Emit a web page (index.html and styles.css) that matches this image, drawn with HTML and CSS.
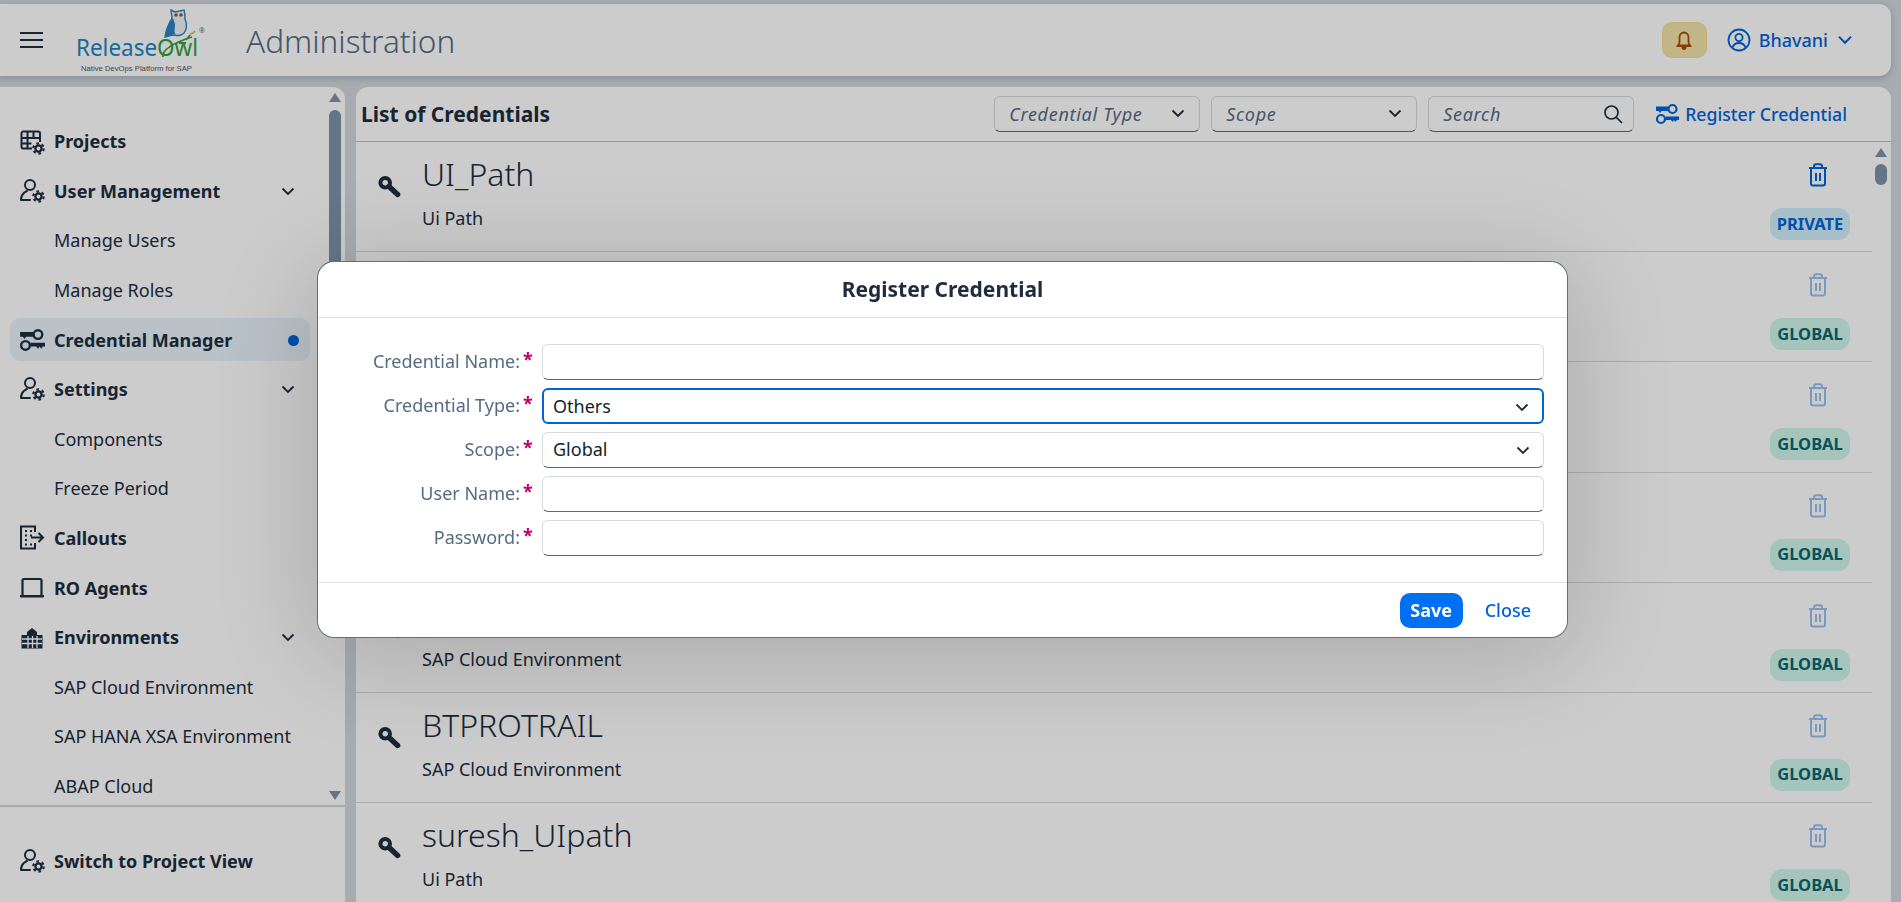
FILE: index.html
```html
<!DOCTYPE html>
<html lang="en">
<head>
    <meta charset="UTF-8">
    <meta name="viewport" content="width=device-width, initial-scale=1.0">
    <title>Administration</title>
    <link rel="stylesheet" href="styles.css">
</head>
<body>
    <svg class="defs" width="0" height="0">
        <symbol id="gear" viewBox="0 0 14 14">
            <circle cx="7" cy="7" r="3.300" fill="none" stroke="currentColor" stroke-width="2.400"/>
            <circle cx="7" cy="7" r="5.600" fill="none" stroke="currentColor" stroke-width="2.400" stroke-dasharray="2.800 3.060"/>
        </symbol>
        <symbol id="person-gear" viewBox="0 0 26 26">
            <circle cx="11" cy="7" r="5" fill="none" stroke="currentColor" stroke-width="2"/>
            <path d="M2 22h9M2 22c0-5 2.500-7.500 6-9" fill="none" stroke="currentColor" stroke-width="2" stroke-linecap="round"/>
            <use href="#gear" x="13" y="12" width="13" height="13"/>
        </symbol>
        <symbol id="key" viewBox="0 0 24 24">
            <circle cx="7.500" cy="7.500" r="5" fill="none" stroke="currentColor" stroke-width="4.200"/>
            <path d="M11.500 11.500L20.500 19.800" fill="none" stroke="currentColor" stroke-width="5.600" stroke-linecap="round"/>
        </symbol>
        <symbol id="trash" viewBox="0 0 22 24">
            <path d="M2 5h18M7 5V3.500C7 2 8 1.300 9 1.300h4c1 0 2 .7 2 2.200V5M4 5v15.500c0 1.200 .8 2 2 2h10c1.200 0 2-.8 2-2V5M9 10v8M13 10v8" fill="none" stroke="currentColor" stroke-width="2"/>
        </symbol>
        <symbol id="keys" viewBox="0 0 24 22">
            <circle cx="17.500" cy="6" r="4" fill="none" stroke="currentColor" stroke-width="2.200"/>
            <path d="M1 3.500h12.500v4.500H6.500L5 10 3.500 8H1z" fill="currentColor"/>
            <circle cx="6" cy="16" r="4" fill="none" stroke="currentColor" stroke-width="2.200"/>
            <path d="M10.500 13.500H24v3.500h-2l-1.500 2-1.500-2-1.500 2-1.500-2h-5.500z" fill="currentColor"/>
        </symbol>
        <symbol id="chevron" viewBox="0 0 14 9">
            <path d="M1.500 1.500L7 7l5.500-5.500" fill="none" stroke="currentColor" stroke-width="1.800"/>
        </symbol>
    </svg>

    <header class="topbar">
        <svg class="burger" viewBox="0 0 23 16"><path d="M0 1h23M0 8h23M0 15h23" stroke="currentColor" stroke-width="1.800"/></svg>
        <svg class="logo" viewBox="0 0 130 66">
            <path d="M95 3l4 2 5-1 4-1c1 3 1 6 1 9 2 5 2 10-1 14-3 3-6 3-9 2-4 0-7 1-10 2 1-8 4-14 7-19 0-3-1-5-1-8z" fill="#eef3f6" stroke="#2c82c4" stroke-width="1.400"/>
            <path d="M89 30c1-8 4-14 8-19l2 6c0 4-1 7 0 10-3 1-7 2-10 3z" fill="#2c82c4"/>
            <circle cx="100" cy="8" r="1.800" fill="#a0522d"/>
            <circle cx="105" cy="8" r="1.800" fill="#a0522d"/>
            <path d="M87 50c-1-7 10-14 29-20M103 36l7 0M110 33l4-5" fill="none" stroke="#3f9a3a" stroke-width="1.800"/>
            <path d="M114 27l3-1 2-2" fill="none" stroke="#c6c23a" stroke-width="1.500"/>
            <text class="logo-word" x="0" y="49" textLength="122" lengthAdjust="spacingAndGlyphs"><tspan fill="#1f84c4">Release</tspan><tspan fill="#35a044">Owl</tspan></text>
            <text class="logo-mark" x="123" y="26">®</text>
            <text class="logo-tag" x="5" y="63.500" textLength="111" lengthAdjust="spacingAndGlyphs">Native DevOps Platform for SAP</text>
        </svg>
        <h1 class="page-title">Administration</h1>
        <div class="topbar-right">
            <button class="bell">
                <svg viewBox="0 0 16 22" width="16" height="22"><path d="M2 16.500c1-1 1.500-2 1.500-4V8a4.500 4.500 0 0 1 9 0v4.500c0 2 .5 3 1.500 4zM1 17h14" fill="none" stroke="currentColor" stroke-width="1.800"/><path d="M5.500 18h5c0 2-1 3-2.500 3s-2.500-1-2.500-3z" fill="currentColor"/></svg>
            </button>
            <svg class="avatar" viewBox="0 0 24 24"><circle cx="12" cy="12" r="10.500" fill="none" stroke="currentColor" stroke-width="1.800"/><circle cx="12" cy="9.500" r="3.600" fill="none" stroke="currentColor" stroke-width="1.800"/><path d="M5.500 19.500c1-3 3.500-4.500 6.500-4.500s5.500 1.500 6.500 4.500" fill="none" stroke="currentColor" stroke-width="1.800"/></svg>
            <span class="user-name">Bhavani</span>
            <svg class="user-chevron"><use href="#chevron"/></svg>
        </div>
    </header>

    <div class="workspace">
        <nav class="sidebar">
            <div class="nav-scroll">
                <ul class="nav-list">
                    <li class="nav-item">
                        <svg class="nav-icon" viewBox="0 0 26 26"><path d="M4 2.500h15c1 0 2 1 2 2V13M2.500 4.500c0-1 1-2 1.500-2M2.500 4v13.500c0 1 .5 2 1.500 2h9M2.500 9h18M2.500 14.500h10M8.500 2.500v17M14.500 2.500V9" fill="none" stroke="currentColor" stroke-width="2"/><use href="#gear" x="13" y="13" width="13" height="13"/></svg>
                        Projects
                    </li>
                    <li class="nav-item">
                        <svg class="nav-icon"><use href="#person-gear"/></svg>
                        User Management
                        <svg class="nav-chevron"><use href="#chevron"/></svg>
                    </li>
                    <li class="nav-item nav-sub">Manage Users</li>
                    <li class="nav-item nav-sub">Manage Roles</li>
                    <li class="nav-item nav-active">
                        <svg class="nav-icon"><use href="#keys"/></svg>
                        Credential Manager
                        <span class="nav-dot"></span>
                    </li>
                    <li class="nav-item">
                        <svg class="nav-icon"><use href="#person-gear"/></svg>
                        Settings
                        <svg class="nav-chevron"><use href="#chevron"/></svg>
                    </li>
                    <li class="nav-item nav-sub">Components</li>
                    <li class="nav-item nav-sub">Freeze Period</li>
                    <li class="nav-item">
                        <svg class="nav-icon" viewBox="0 0 26 26"><path d="M16 7V1.500H2v22h14V18M6 6h2M11 6h2M6 10.500h2M11 10.500h2M6 15h2M11 15h0M6 19.500h2M11 19.500h2M12 12.500h12M19.500 8l4.500 4.500-4.500 4.500" fill="none" stroke="currentColor" stroke-width="2"/></svg>
                        Callouts
                    </li>
                    <li class="nav-item">
                        <svg class="nav-icon" viewBox="0 0 26 26"><path d="M3.500 20V5.500c0-1 .5-1.500 1.500-1.500h16c1 0 1.500 .5 1.500 1.500V20" fill="none" stroke="currentColor" stroke-width="2.200"/><path d="M1 20h24v1.500c0 .5-.5 1-1 1H2c-.5 0-1-.5-1-1z" fill="currentColor"/></svg>
                        RO Agents
                    </li>
                    <li class="nav-item">
                        <svg class="nav-icon" viewBox="0 0 26 26"><path d="M13 1v3l5 4v3h5.500v13.500h-21V11H8V8l5-4z" fill="currentColor"/><path d="M3 15h20M3 19.500h20M9 12v12M13.500 12v12M18 12v12" stroke="#fff" stroke-width="1.300"/></svg>
                        Environments
                        <svg class="nav-chevron"><use href="#chevron"/></svg>
                    </li>
                    <li class="nav-item nav-sub">SAP Cloud Environment</li>
                    <li class="nav-item nav-sub">SAP HANA XSA Environment</li>
                    <li class="nav-item nav-sub">ABAP Cloud</li>
                </ul>
                <div class="scrollbar scrollbar-nav">
                    <span class="arrow-up"></span>
                    <span class="thumb"></span>
                    <span class="arrow-down"></span>
                </div>
            </div>
            <div class="nav-footer">
                <div class="nav-item">
                    <svg class="nav-icon"><use href="#person-gear"/></svg>
                    Switch to Project View
                </div>
            </div>
        </nav>

        <main class="panel">
            <div class="panel-head">
                <h2 class="panel-title">List of Credentials</h2>
                <div class="filter">Credential Type<svg class="filter-chevron"><use href="#chevron"/></svg></div>
                <div class="filter">Scope<svg class="filter-chevron"><use href="#chevron"/></svg></div>
                <div class="filter">Search
                    <svg class="filter-search" viewBox="0 0 20 20"><circle cx="8.500" cy="8.500" r="6.500" fill="none" stroke="currentColor" stroke-width="1.700"/><path d="M13 13l6 6" stroke="currentColor" stroke-width="1.700"/></svg>
                </div>
                <a class="register-link"><svg class="register-icon"><use href="#keys"/></svg>Register Credential</a>
            </div>
            <div class="cred-list">
                <div class="cred-row">
                    <svg class="cred-key"><use href="#key"/></svg>
                    <div class="cred-text"><div class="cred-name">UI_Path</div><div class="cred-type">Ui Path</div></div>
                    <div class="cred-side"><svg class="cred-trash"><use href="#trash"/></svg><span class="badge badge-private">PRIVATE</span></div>
                </div>
                <div class="cred-row">
                    <svg class="cred-key"><use href="#key"/></svg>
                    <div class="cred-text"><div class="cred-name"></div><div class="cred-type"></div></div>
                    <div class="cred-side"><svg class="cred-trash is-off"><use href="#trash"/></svg><span class="badge">GLOBAL</span></div>
                </div>
                <div class="cred-row">
                    <svg class="cred-key"><use href="#key"/></svg>
                    <div class="cred-text"><div class="cred-name"></div><div class="cred-type"></div></div>
                    <div class="cred-side"><svg class="cred-trash is-off"><use href="#trash"/></svg><span class="badge">GLOBAL</span></div>
                </div>
                <div class="cred-row">
                    <svg class="cred-key"><use href="#key"/></svg>
                    <div class="cred-text"><div class="cred-name"></div><div class="cred-type"></div></div>
                    <div class="cred-side"><svg class="cred-trash is-off"><use href="#trash"/></svg><span class="badge">GLOBAL</span></div>
                </div>
                <div class="cred-row">
                    <svg class="cred-key"><use href="#key"/></svg>
                    <div class="cred-text"><div class="cred-name"></div><div class="cred-type">SAP Cloud Environment</div></div>
                    <div class="cred-side"><svg class="cred-trash is-off"><use href="#trash"/></svg><span class="badge">GLOBAL</span></div>
                </div>
                <div class="cred-row">
                    <svg class="cred-key"><use href="#key"/></svg>
                    <div class="cred-text"><div class="cred-name">BTPROTRAIL</div><div class="cred-type">SAP Cloud Environment</div></div>
                    <div class="cred-side"><svg class="cred-trash is-off"><use href="#trash"/></svg><span class="badge">GLOBAL</span></div>
                </div>
                <div class="cred-row">
                    <svg class="cred-key"><use href="#key"/></svg>
                    <div class="cred-text"><div class="cred-name">suresh_UIpath</div><div class="cred-type">Ui Path</div></div>
                    <div class="cred-side"><svg class="cred-trash is-off"><use href="#trash"/></svg><span class="badge">GLOBAL</span></div>
                </div>
                <div class="scrollbar scrollbar-list">
                    <span class="arrow-up"></span>
                    <span class="thumb"></span>
                </div>
            </div>
        </main>
    </div>

    <div class="scrim"></div>

    <section class="dialog">
        <div class="dialog-head">Register Credential</div>
        <form class="dialog-form">
            <label class="form-label">Credential Name:<span class="req">*</span></label>
            <input class="field" type="text">
            <label class="form-label">Credential Type:<span class="req">*</span></label>
            <div class="field field-focus">Others<svg class="field-chevron"><use href="#chevron"/></svg></div>
            <label class="form-label">Scope:<span class="req">*</span></label>
            <div class="field">Global<svg class="field-chevron"><use href="#chevron"/></svg></div>
            <label class="form-label">User Name:<span class="req">*</span></label>
            <input class="field" type="text">
            <label class="form-label">Password:<span class="req">*</span></label>
            <input class="field" type="password">
        </form>
        <div class="dialog-foot">
            <button class="btn-save">Save</button>
            <button class="btn-close">Close</button>
        </div>
    </section>
</body>
</html>
```

FILE: styles.css
```css
* {
    box-sizing: border-box;
}
html, body {
    height: 100%;
}
body {
    margin: 0;
    padding-top: 4px;
    overflow: hidden;
    display: flex;
    flex-direction: column;
    gap: 11px;
    background-color: #d2d7dc;
    color: #1d2d3e;
    font-family: "Noto Sans", Arial, sans-serif;
    font-size: 18px;
}
.defs {
    position: absolute;
}
h1, h2, ul {
    margin: 0;
    padding: 0;
}
li {
    list-style: none;
}

/* top bar */
.topbar {
    flex: 0 0 72px;
    margin-right: 10px;
    padding-left: 20px;
    display: flex;
    align-items: center;
    background-color: #fff;
    border-radius: 0 12px 12px 0;
    box-shadow: 0 2px 6px rgba(85, 107, 130, .35);
}
.burger {
    width: 23px;
    height: 16px;
    color: #1d2d3e;
}
.logo {
    width: 130px;
    height: 66px;
    margin-left: 33px;
}
.logo-word {
    font-size: 23px;
}
.logo-mark {
    font-size: 7px;
    fill: #666;
}
.logo-tag {
    font-family: "Liberation Sans", Arial, sans-serif;
    font-size: 7.5px;
    fill: #555;
}
.page-title {
    margin-left: 40px;
    font-size: 31.5px;
    font-weight: 300;
    color: #556b82;
}
.topbar-right {
    margin-left: auto;
    padding-right: 38px;
    display: flex;
    align-items: center;
    color: #0064d9;
}
.bell {
    width: 45px;
    height: 36px;
    padding: 0;
    margin-right: 20px;
    display: flex;
    align-items: center;
    justify-content: center;
    color: #aa4a00;
    background-color: #f3e3ab;
    border: 1px solid #f0dc90;
    border-radius: 10px;
}
.avatar {
    width: 24px;
    height: 24px;
    margin-right: 8px;
}
.user-name {
    font-weight: 500;
}
.user-chevron {
    width: 16px;
    height: 10px;
    margin-left: 9px;
}

/* page below the bar */
.workspace {
    flex: 1;
    min-height: 0;
    display: flex;
    gap: 11px;
    padding-right: 10px;
}

/* side navigation */
.sidebar {
    flex: 0 0 345px;
    display: flex;
    flex-direction: column;
    background-color: #fff;
    border-radius: 0 12px 0 0;
}
.nav-scroll {
    position: relative;
    height: 720px;
    padding: 29.5px 0 0 10px;
    overflow: hidden;
    border-bottom: 2px solid #d6d6d6;
}
.nav-item {
    position: relative;
    width: 300px;
    height: 49.6px;
    padding-left: 44px;
    display: flex;
    align-items: center;
    font-weight: 700;
    color: #1d2d3e;
    white-space: nowrap;
}
.nav-sub {
    font-weight: 400;
}
.nav-active {
    isolation: isolate;
}
.nav-active::before {
    content: "";
    position: absolute;
    inset: 3px 0;
    z-index: -1;
    background-color: #e9f3fb;
    border-radius: 10px;
}
.nav-icon {
    position: absolute;
    left: 9px;
    top: 12px;
    width: 26px;
    height: 26px;
}
.nav-chevron {
    width: 14px;
    height: 9px;
    position: absolute;
    left: 271px;
    top: 21px;
}
.nav-dot {
    position: absolute;
    left: 278px;
    top: 20px;
    width: 11px;
    height: 11px;
    background-color: #0064d9;
    border-radius: 50%;
}
.nav-footer {
    padding: 29px 0 0 10px;
}

/* scrollbars */
.scrollbar {
    position: absolute;
    width: 12px;
    display: flex;
    flex-direction: column;
    align-items: center;
}
.scrollbar-nav {
    left: 329px;
    top: 6px;
    bottom: 5px;
}
.scrollbar-list {
    right: 4px;
    top: 6px;
}
.thumb {
    width: 12px;
    border-radius: 6px;
    background-color: #7d93ab;
}
.scrollbar-nav .thumb {
    height: 400px;
    margin: 8px 0 auto;
}
.scrollbar-list .thumb {
    height: 21px;
    margin-top: 7px;
}
.arrow-up, .arrow-down {
    width: 0;
    height: 0;
    border-left: 6px solid transparent;
    border-right: 6px solid transparent;
}
.arrow-up {
    border-bottom: 9px solid #7d93ab;
}
.arrow-down {
    border-top: 9px solid #7d93ab;
}

/* credential list */
.panel {
    flex: 1;
    min-width: 0;
    display: flex;
    flex-direction: column;
    background-color: #fff;
    border-radius: 12px 12px 0 0;
}
.panel-head {
    flex: 0 0 55px;
    padding: 0 44px 0 5px;
    display: flex;
    align-items: center;
    border-bottom: 1px solid #b6c0c9;
}
.panel-title {
    margin-right: auto;
    font-size: 21px;
    font-weight: 700;
}
.filter {
    position: relative;
    width: 206px;
    height: 36px;
    margin-right: 11px;
    padding-left: 14px;
    display: flex;
    align-items: center;
    font-style: italic;
    letter-spacing: .7px;
    color: #556b82;
    background-color: #fff;
    border: 1px solid #d5dadd;
    border-bottom-color: #556b82;
    border-radius: 6px;
}
.filter-chevron {
    position: absolute;
    right: 14px;
    top: 12px;
    width: 14px;
    height: 9px;
    color: #1d2d3e;
}
.filter-search {
    position: absolute;
    right: 10px;
    top: 7px;
    width: 20px;
    height: 20px;
    color: #1d2d3e;
}
.register-link {
    margin-left: 10px;
    display: flex;
    align-items: center;
    gap: 6px;
    font-size: 17.7px;
    font-weight: 500;
    color: #0064d9;
    white-space: nowrap;
}
.register-icon {
    width: 24px;
    height: 22px;
}
.cred-list {
    position: relative;
    flex: 1;
    min-height: 0;
    padding-right: 19px;
    overflow: hidden;
}
.cred-row {
    height: 110.2px;
    padding: 0 22px;
    display: flex;
    align-items: flex-start;
    border-bottom: 1px solid #dadada;
}
.cred-key {
    width: 23px;
    height: 24px;
    margin-top: 33px;
}
.cred-text {
    flex: 1;
    margin-left: 21px;
}
.cred-name {
    height: 44px;
    margin-top: 10px;
    font-size: 32px;
    font-weight: 300;
    line-height: 44px;
}
.cred-type {
    height: 24px;
    margin-top: 10px;
    line-height: 24px;
}
.cred-side {
    width: 80px;
    display: flex;
    flex-direction: column;
    align-items: center;
}
.cred-trash {
    width: 22px;
    height: 24px;
    margin-top: 21px;
    margin-left: 15px;
    color: #0064d9;
}
.cred-trash.is-off {
    opacity: .4;
}
.badge {
    width: 80px;
    height: 32px;
    margin-top: 21px;
    padding-bottom: 2px;
    display: flex;
    align-items: center;
    justify-content: center;
    font-size: 16.5px;
    font-weight: 700;
    color: #0a6670;
    background-color: #cdf5ec;
    border-radius: 12px;
}
.badge-private {
    color: #0064d9;
    background-color: #d1effa;
}

/* modal */
.scrim {
    position: fixed;
    inset: 0;
    background-color: rgba(0, 0, 0, .2);
}
.dialog {
    position: fixed;
    left: 318px;
    top: 262px;
    width: 1249px;
    height: 375px;
    display: flex;
    flex-direction: column;
    background-color: #fff;
    border-radius: 16px;
    box-shadow: 0 0 0 1px #5f6f80, 0 14px 110px 10px rgba(0, 0, 0, .17);
}
.dialog-head {
    flex: 0 0 56px;
    padding-bottom: 2px;
    display: flex;
    align-items: center;
    justify-content: center;
    font-size: 21px;
    font-weight: 700;
    border-bottom: 1px solid #dcdfe3;
}
.dialog-form {
    flex: 1;
    padding: 26px 23px 0 0;
    display: grid;
    grid-template-columns: 224px 1fr;
    grid-auto-rows: 36px;
    row-gap: 8px;
    align-items: center;
}
.form-label {
    padding-bottom: 2px;
    display: flex;
    justify-content: flex-end;
    color: #556b82;
    white-space: nowrap;
}
.req {
    width: 22px;
    padding-left: 3px;
    font-weight: 700;
    font-size: 18px;
    line-height: 20px;
    color: #c0006e;
}
.field {
    position: relative;
    width: 100%;
    height: 36px;
    padding: 0 10px 2px;
    display: flex;
    align-items: center;
    font: inherit;
    color: #131e29;
    background-color: #fff;
    border: 1px solid #d5dadd;
    border-bottom-color: #556b82;
    border-radius: 6px;
    outline: none;
}
.field-focus {
    border: 2px solid #0064d9;
    padding: 0 9px;
}
.field-chevron {
    position: absolute;
    right: 13px;
    top: 13px;
    width: 14px;
    height: 9px;
    color: #1d2d3e;
}
.dialog-foot {
    flex: 0 0 55px;
    padding-right: 36px;
    display: flex;
    align-items: center;
    justify-content: flex-end;
    gap: 22px;
    border-top: 1px solid #dcdfe3;
}
.btn-save, .btn-close {
    height: 35px;
    padding: 0;
    border: none;
    font: inherit;
    cursor: pointer;
}
.btn-save {
    width: 63px;
    color: #fff;
    font-weight: 700;
    background-color: #0070f2;
    border-radius: 10px;
}
.btn-close {
    color: #0064d9;
    font-weight: 500;
    background: none;
}
```
